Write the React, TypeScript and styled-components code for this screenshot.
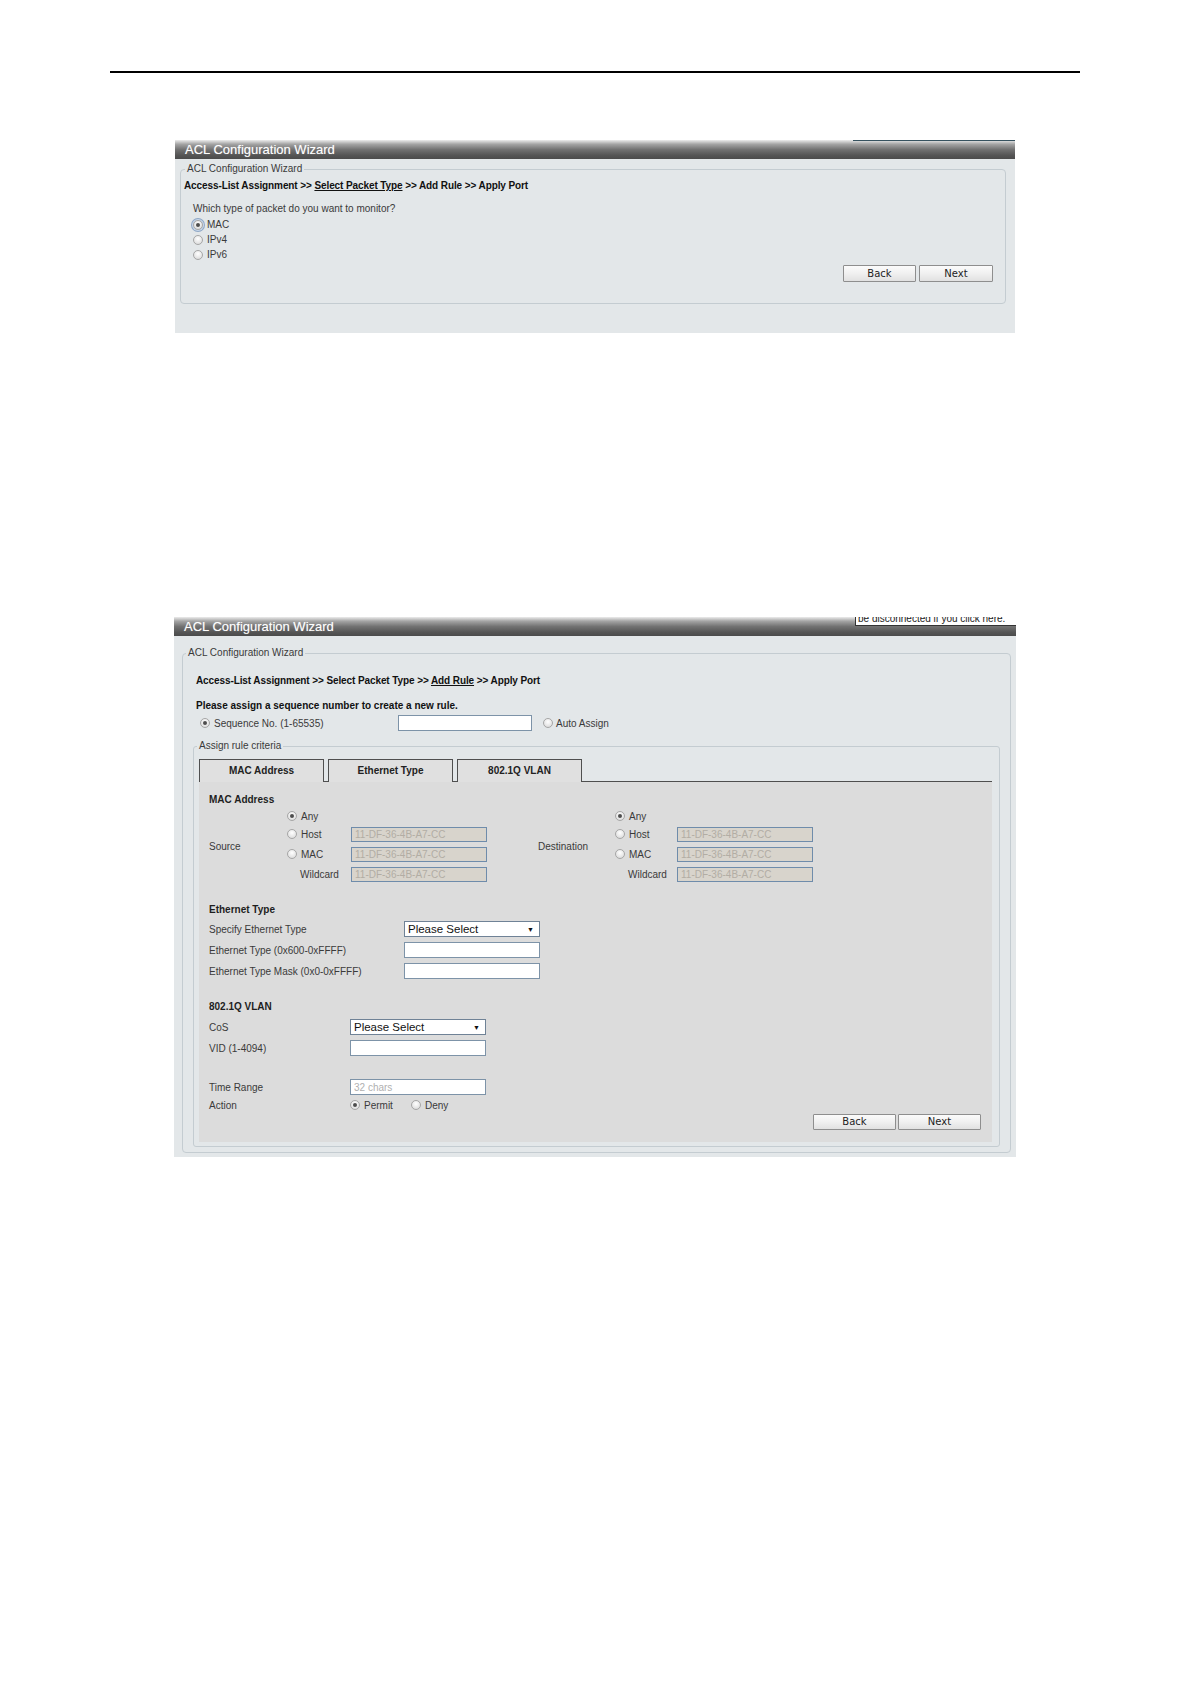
import React from "react";
import styled, { createGlobalStyle, css } from "styled-components";

const GlobalStyle = createGlobalStyle`
  body {
    margin: 0;
    background: #ffffff;
    font-family: "Liberation Sans", Arial, sans-serif;
  }
`;

const Page = styled.div`
  width: 1191px;
  min-height: 1684px;
  padding-top: 71px;
  box-sizing: border-box;
`;

const Rule = styled.hr`
  margin: 0 0 0 110px;
  width: 970px;
  height: 0;
  border: 0;
  border-top: 2px solid #000;
`;

const Panel = styled.section<{ $top: number; $left: number; $width: number }>`
  position: relative;
  margin: ${(p) => p.$top}px 0 0 ${(p) => p.$left}px;
  width: ${(p) => p.$width}px;
  background: #e3e7e9;
  overflow: hidden;
`;

const TitleBar = styled.div`
  position: relative;
  height: 19px;
  line-height: 19px;
  padding-left: 10px;
  color: #ffffff;
  font-size: 13px;
  text-shadow: 0 0 1px rgba(255, 255, 255, 0.4);
  background: linear-gradient(
    to bottom,
    #ececec 0%,
    #a4a4a4 22%,
    #727272 50%,
    #555555 80%,
    #4b4b4b 100%
  );
`;

const TopStrip = styled.div`
  position: absolute;
  top: 0;
  right: 0;
  width: 162px;
  height: 1px;
  background: #36525f;
`;

const Notice = styled.div`
  position: absolute;
  top: 0;
  right: 0;
  width: 160px;
  height: 8px;
  overflow: hidden;
  background: #ffffff;
  border-left: 1px solid #333;
  border-bottom: 1px solid #333;
  span {
    display: block;
    margin-top: -4px;
    padding-left: 2px;
    font-size: 10px;
    line-height: 12px;
    color: #222;
    white-space: nowrap;
  }
`;

const WizardFieldset = styled.fieldset<{ $margin: string }>`
  margin: ${(p) => p.$margin};
  padding: 0;
  border: 1px solid #c4ccd1;
  border-radius: 4px;
  min-width: 0;
`;

const Legend = styled.legend<{ $offset: number }>`
  margin-left: ${(p) => p.$offset}px;
  padding: 0 2px;
  font-size: 10px;
  line-height: 12px;
  color: #3a3a3a;
`;

const Crumbs = styled.div<{ $top: number; $left: number }>`
  margin: ${(p) => p.$top}px 0 0 ${(p) => p.$left}px;
  font-size: 10px;
  line-height: 14px;
  font-weight: bold;
  letter-spacing: -0.1px;
  color: #111;
  u {
    text-decoration: underline;
  }
`;

const Prompt = styled.div<{ $top: number; $left: number; $bold?: boolean }>`
  margin: ${(p) => p.$top}px 0 0 ${(p) => p.$left}px;
  font-size: 10px;
  line-height: 14px;
  color: ${(p) => (p.$bold ? "#111" : "#3a3a3a")};
  font-weight: ${(p) => (p.$bold ? "bold" : "normal")};
`;

const RadioList = styled.div`
  margin: 1px 0 0 12px;
  display: flex;
  flex-direction: column;
`;

const RadioLine = styled.div`
  height: 15px;
  display: flex;
  align-items: center;
`;

const RadioDot = styled.span<{ $checked?: boolean; $focused?: boolean }>`
  position: relative;
  flex: none;
  display: inline-block;
  width: 10px;
  height: 10px;
  box-sizing: border-box;
  border-radius: 50%;
  border: 1px solid #a6a6a6;
  background: radial-gradient(circle at 50% 35%, #ffffff 0%, #e6e6e6 60%, #d4d4d4 100%);
  ${(p) =>
    p.$checked &&
    css`
      &::after {
        content: "";
        position: absolute;
        left: 2px;
        top: 2px;
        width: 4px;
        height: 4px;
        border-radius: 50%;
        background: #4d4d4d;
      }
    `}
  ${(p) =>
    p.$focused &&
    css`
      box-shadow: 0 0 0 1px #c9d8ea, 0 0 0 2px #8fa7c6;
    `}
`;

const RadioOption = styled.label<{ $gap?: number }>`
  display: inline-flex;
  align-items: center;
  gap: ${(p) => p.$gap ?? 4}px;
  font-size: 10px;
  color: #3a3a3a;
  white-space: nowrap;
`;

const ButtonBar = styled.div<{ $gap: number; $right: number; $top: number; $bottom: number }>`
  display: flex;
  justify-content: flex-end;
  gap: ${(p) => p.$gap}px;
  margin: ${(p) => p.$top}px ${(p) => p.$right}px ${(p) => p.$bottom}px 0;
`;

const WizButton = styled.button<{ $w: number; $h: number }>`
  width: ${(p) => p.$w}px;
  height: ${(p) => p.$h}px;
  padding: 0;
  border: 1px solid #8e8e8e;
  border-radius: 1px;
  background: linear-gradient(to bottom, #fbfbfb 0%, #f0f0f0 50%, #e1e1e1 100%);
  font-family: "DejaVu Sans", Verdana, sans-serif;
  font-size: 10px;
  color: #222;
  line-height: 1;
`;

const SeqRow = styled.div`
  margin: 2px 0 0 17px;
  height: 16px;
  display: flex;
  align-items: center;
`;

const SeqLabel = styled(RadioOption)`
  width: 198px;
`;

const AutoAssign = styled(RadioOption)`
  margin-left: 11px;
`;

const TextBox = styled.input<{ $w: number; $h: number; $muted?: boolean }>`
  width: ${(p) => p.$w}px;
  height: ${(p) => p.$h}px;
  box-sizing: border-box;
  margin: 0;
  padding: 0 3px;
  border: 1px solid ${(p) => (p.$muted ? "#6f8cab" : "#7d93a8")};
  background: ${(p) => (p.$muted ? "#d8d4cc" : "#ffffff")};
  font-family: "Liberation Sans", Arial, sans-serif;
  font-size: 10px;
  color: ${(p) => (p.$muted ? "#b2ada4" : "#222")};
  outline: none;
  &::placeholder {
    color: #b0b0b0;
  }
`;

const CriteriaFieldset = styled.fieldset`
  margin: 9px 10px 5px 10px;
  padding: 0 7px 4px 5px;
  border: 1px solid #c4ccd1;
  border-radius: 3px;
  min-width: 0;
`;

const TabStrip = styled.div`
  margin-top: 7px;
  display: flex;
  gap: 4px;
  height: 23px;
  box-sizing: border-box;
  border-bottom: 1px solid #4f4f4f;
`;

const Tab = styled.div`
  width: 125px;
  height: 23px;
  box-sizing: border-box;
  border: 1px solid #4f4f4f;
  border-bottom: 0;
  background: #e0e0e0;
  text-align: center;
  font-size: 10px;
  line-height: 22px;
  font-weight: bold;
  color: #222;
`;

const TabPanel = styled.div`
  background: #dcdcdc;
  padding: 11px 0 12px 10px;
`;

const SectionTitle = styled.div<{ $top?: number }>`
  margin-top: ${(p) => p.$top ?? 0}px;
  font-size: 10px;
  line-height: 14px;
  font-weight: bold;
  color: #1e1e1e;
`;

const MacRow = styled.div`
  margin-top: 1px;
  display: flex;
  gap: 51px;
`;

const MacSide = styled.div`
  display: flex;
  align-items: center;
`;

const SideLabel = styled.div<{ $w: number }>`
  width: ${(p) => p.$w}px;
  font-size: 10px;
  color: #3a3a3a;
`;

const OptionGrid = styled.div<{ $col: number }>`
  display: grid;
  grid-template-columns: ${(p) => p.$col}px 136px;
  grid-template-rows: 16px 20px 20px 20px;
  align-items: center;
`;

const Wildcard = styled.div`
  padding-left: 13px;
  font-size: 10px;
  color: #3a3a3a;
`;

const FieldRow = styled.div<{ $label: number; $top?: number }>`
  margin-top: ${(p) => p.$top ?? 0}px;
  display: grid;
  grid-template-columns: ${(p) => p.$label}px 136px;
  height: 20px;
  align-items: center;
  font-size: 10px;
  color: #3a3a3a;
`;

const ActionRow = styled(FieldRow)`
  height: 16px;
`;

const ActionChoices = styled.div`
  display: flex;
  gap: 18px;
`;

const SelectBox = styled.div<{ $h: number }>`
  height: ${(p) => p.$h}px;
  box-sizing: border-box;
  border: 1px solid #6f8296;
  background: #ffffff;
  display: flex;
  align-items: center;
  justify-content: space-between;
  padding: 0 5px 0 3px;
  font-size: 11.5px;
  color: #111;
  i {
    font-style: normal;
    font-size: 7px;
  }
`;

function Radio({
  label,
  checked,
  focused,
}: {
  label: string;
  checked?: boolean;
  focused?: boolean;
}) {
  return (
    <RadioOption>
      <RadioDot $checked={checked} $focused={focused} />
      {label}
    </RadioOption>
  );
}

function MacGroup({ label, labelWidth, col }: { label: string; labelWidth: number; col: number }) {
  const mac = "11-DF-36-4B-A7-CC";
  return (
    <MacSide>
      <SideLabel $w={labelWidth}>{label}</SideLabel>
      <OptionGrid $col={col}>
        <Radio label="Any" checked />
        <span />
        <Radio label="Host" />
        <TextBox $w={136} $h={15} $muted readOnly value={mac} />
        <Radio label="MAC" />
        <TextBox $w={136} $h={15} $muted readOnly value={mac} />
        <Wildcard>Wildcard</Wildcard>
        <TextBox $w={136} $h={15} $muted readOnly value={mac} />
      </OptionGrid>
    </MacSide>
  );
}

export default function App() {
  return (
    <Page>
      <GlobalStyle />
      <Rule />

      <Panel $top={67} $left={175} $width={840}>
        <TitleBar>
          ACL Configuration Wizard
          <TopStrip />
        </TitleBar>
        <WizardFieldset $margin="4px 9px 29px 5px">
          <Legend $offset={4}>ACL Configuration Wizard</Legend>
          <Crumbs $top={4} $left={3}>
            Access-List Assignment &gt;&gt; <u>Select Packet Type</u> &gt;&gt; Add Rule &gt;&gt; Apply Port
          </Crumbs>
          <Prompt $top={9} $left={12}>
            Which type of packet do you want to monitor?
          </Prompt>
          <RadioList>
            <RadioLine>
              <Radio label="MAC" checked focused />
            </RadioLine>
            <RadioLine>
              <Radio label="IPv4" />
            </RadioLine>
            <RadioLine>
              <Radio label="IPv6" />
            </RadioLine>
          </RadioList>
          <ButtonBar $gap={3} $right={12} $top={3} $bottom={21}>
            <WizButton $w={73} $h={17}>Back</WizButton>
            <WizButton $w={74} $h={17}>Next</WizButton>
          </ButtonBar>
        </WizardFieldset>
      </Panel>

      <Panel $top={284} $left={174} $width={842}>
        <TitleBar>
          ACL Configuration Wizard
          <Notice>
            <span>be disconnected if you click here.</span>
          </Notice>
        </TitleBar>
        <WizardFieldset $margin="11px 5px 4px 8px">
          <Legend $offset={3}>ACL Configuration Wizard</Legend>
          <Crumbs $top={15} $left={13}>
            Access-List Assignment &gt;&gt; Select Packet Type &gt;&gt; <u>Add Rule</u> &gt;&gt; Apply Port
          </Crumbs>
          <Prompt $top={11} $left={13} $bold>
            Please assign a sequence number to create a new rule.
          </Prompt>
          <SeqRow>
            <SeqLabel>
              <RadioDot $checked />
              Sequence No. (1-65535)
            </SeqLabel>
            <TextBox $w={134} $h={16} />
            <AutoAssign $gap={3}>
              <RadioDot />
              Auto Assign
            </AutoAssign>
          </SeqRow>

          <CriteriaFieldset>
            <Legend $offset={-2}>Assign rule criteria</Legend>
            <TabStrip>
              <Tab>MAC Address</Tab>
              <Tab>Ethernet Type</Tab>
              <Tab>802.1Q VLAN</Tab>
            </TabStrip>
            <TabPanel>
              <SectionTitle>MAC Address</SectionTitle>
              <MacRow>
                <MacGroup label="Source" labelWidth={78} col={64} />
                <MacGroup label="Destination" labelWidth={77} col={62} />
              </MacRow>

              <SectionTitle $top={19}>Ethernet Type</SectionTitle>
              <FieldRow $label={195} $top={2}>
                <span>Specify Ethernet Type</span>
                <SelectBox $h={16}>
                  Please Select <i>▼</i>
                </SelectBox>
              </FieldRow>
              <FieldRow $label={195} $top={1}>
                <span>Ethernet Type (0x600-0xFFFF)</span>
                <TextBox $w={136} $h={16} />
              </FieldRow>
              <FieldRow $label={195} $top={1}>
                <span>Ethernet Type Mask (0x0-0xFFFF)</span>
                <TextBox $w={136} $h={16} />
              </FieldRow>

              <SectionTitle $top={19}>802.1Q VLAN</SectionTitle>
              <FieldRow $label={141} $top={3}>
                <span>CoS</span>
                <SelectBox $h={16}>
                  Please Select <i>▼</i>
                </SelectBox>
              </FieldRow>
              <FieldRow $label={141} $top={1}>
                <span>VID (1-4094)</span>
                <TextBox $w={136} $h={16} />
              </FieldRow>

              <FieldRow $label={141} $top={19}>
                <span>Time Range</span>
                <TextBox $w={136} $h={16} placeholder="32 chars" />
              </FieldRow>
              <ActionRow $label={141}>
                <span>Action</span>
                <ActionChoices>
                  <Radio label="Permit" checked />
                  <Radio label="Deny" />
                </ActionChoices>
              </ActionRow>
              <ButtonBar $gap={2} $right={11} $top={1} $bottom={0}>
                <WizButton $w={83} $h={16}>Back</WizButton>
                <WizButton $w={83} $h={16}>Next</WizButton>
              </ButtonBar>
            </TabPanel>
          </CriteriaFieldset>
        </WizardFieldset>
      </Panel>
    </Page>
  );
}
